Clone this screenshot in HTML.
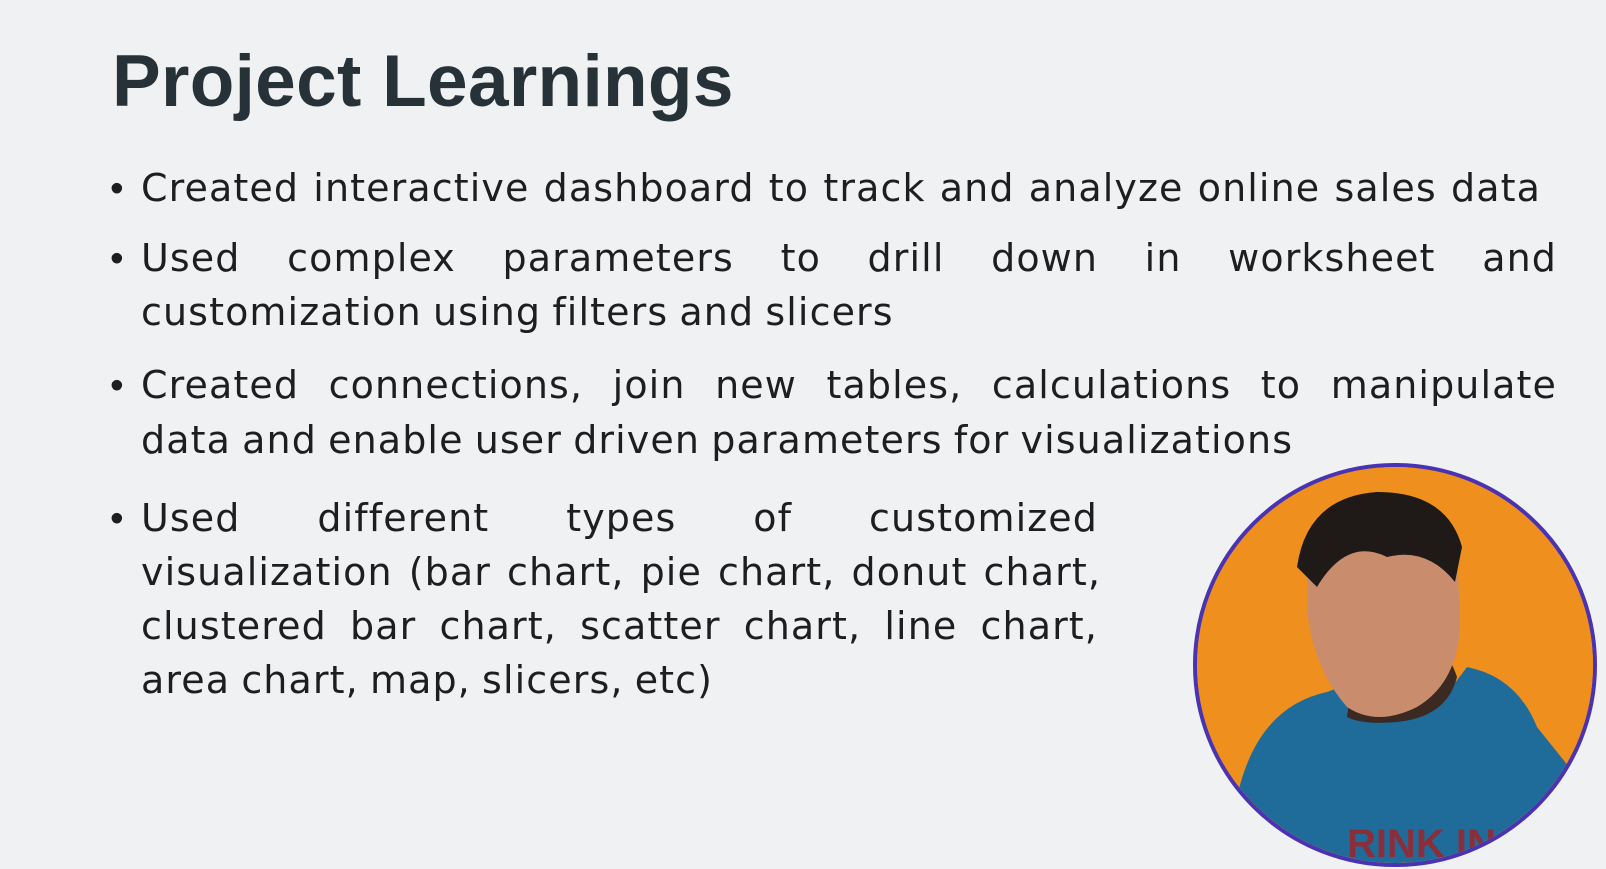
<!DOCTYPE html>
<html><head><meta charset="utf-8"><style>
body{margin:0;width:1606px;height:869px;background:#f0f1f3;overflow:hidden;position:relative;font-family:"Liberation Sans",sans-serif;}
h1{position:absolute;left:112px;top:40px;margin:0;font-size:73px;font-weight:bold;color:#263238;letter-spacing:0.3px}
.l{position:absolute;left:141px;font-family:"DejaVu Sans",sans-serif;font-size:38px;letter-spacing:1.1px;word-spacing:-2px;color:#1e1e1e;white-space:nowrap;line-height:1;}
.j{text-align:justify;text-align-last:justify;white-space:normal}
.b{position:absolute;left:110px;font-size:39px;color:#1e1e1e;line-height:1}
.circ{position:absolute;left:1193px;top:463px;width:396px;height:396px;border-radius:50%;border:4px solid #4a33b3;overflow:hidden;background:#ee8e1c}
</style></head><body>
<h1>Project Learnings</h1>
<div class="b" style="top:169px">•</div>
<div class="l j" style="top:169px;width:1400px">Created interactive dashboard to track and analyze online sales data</div>
<div class="b" style="top:239px">•</div>
<div class="l j" style="top:239px;width:1416px">Used complex parameters to drill down in worksheet and</div>
<div class="l" style="top:293px">customization using filters and slicers</div>
<div class="b" style="top:366px">•</div>
<div class="l j" style="top:366px;width:1416px">Created connections, join new tables, calculations to manipulate</div>
<div class="l" style="top:421px">data and enable user driven parameters for visualizations</div>
<div class="b" style="top:499px">•</div>
<div class="l j" style="top:499px;width:957px">Used different types of customized</div>
<div class="l j" style="top:553px;width:960px">visualization (bar chart, pie chart, donut chart,</div>
<div class="l j" style="top:607px;width:957px">clustered bar chart, scatter chart, line chart,</div>
<div class="l" style="top:661px">area chart, map, slicers, etc)</div>
<div class="circ">
<svg width="396" height="396" viewBox="0 0 396 396">
<rect width="396" height="396" fill="#ef8f1d"/>
<path d="M40 330 Q60 240 130 225 L170 210 Q200 250 240 240 L270 200 Q320 210 340 260 L396 330 L396 396 L0 396 Z" fill="#1f6c9a"/>
<path d="M150 250 Q160 170 200 165 Q245 165 260 210 Q250 250 200 255 Q165 258 150 250Z" fill="#3a2a22"/>
<path d="M110 100 Q120 50 180 40 Q240 35 260 80 L262 130 Q270 210 220 240 Q180 260 150 240 Q115 200 110 140Z" fill="#c98d6d"/>
<path d="M100 100 Q110 30 180 25 Q250 25 265 80 L258 115 Q230 80 190 90 Q150 70 120 120Z" fill="#1f1a18"/>
<text x="150" y="390" font-family="Liberation Sans" font-weight="bold" font-size="40" fill="#8a2f3a">RINK IN</text>
</svg>
</div>
</body></html>
